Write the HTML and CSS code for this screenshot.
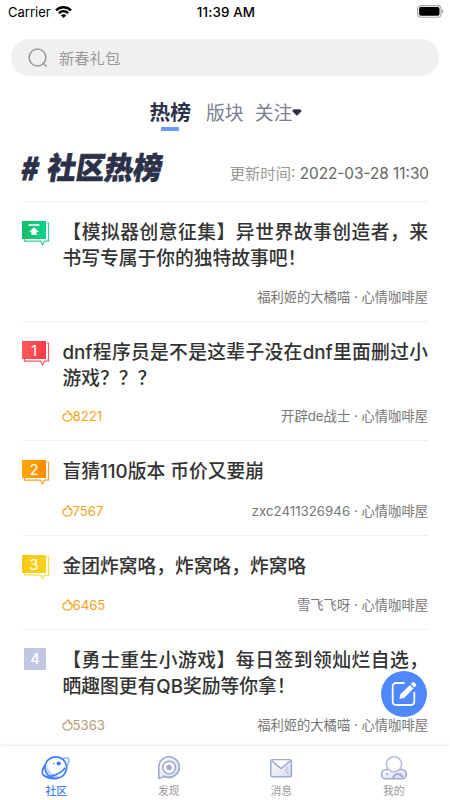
FILE: index.html
```html
<!DOCTYPE html>
<html lang="zh-CN">
<head>
<meta charset="utf-8">
<title>社区热榜</title>
<link rel="stylesheet" href="styles.css">
</head>
<body>
<svg class="defs" width="0" height="0" aria-hidden="true">
  <defs>
    <symbol id="flame" viewBox="0 0 11 12"><path d="M3.4 5.3L2.5 3.8C.7 5 .2 7.5 1.6 9.3 3.4 11.7 7.4 11.7 9.2 9.3 10.5 7.4 10.1 5.2 8.7 3.7L7.4 4.7C7.9 3.1 7.1 1.6 5.6.8 5.5 2.4 4.7 3.4 3.4 4" fill="none" stroke="currentColor" stroke-width="1.15" stroke-linejoin="round"/></symbol>
    <linearGradient id="green" x2="1"><stop stop-color="#17bd68"/><stop offset="1" stop-color="#08d18b"/></linearGradient>
    <linearGradient id="red" x2="1"><stop stop-color="#ff5a5a"/><stop offset="1" stop-color="#fc3946"/></linearGradient>
    <linearGradient id="orange" x2="1"><stop stop-color="#ffa900"/><stop offset="1" stop-color="#ff8a00"/></linearGradient>
    <linearGradient id="yellow" x2="1"><stop stop-color="#fbc916"/><stop offset="1" stop-color="#fbd21b"/></linearGradient>
    <linearGradient id="shade" x2="1" y2="1"><stop stop-color="#fff"/><stop offset="1" stop-color="#d4d9ec"/></linearGradient>
  </defs>
</svg>
<div class="app">
  <header class="status">
    <div class="carrier">Carrier
      <svg width="17" height="12" viewBox="0 0 17 12"><g fill="none" stroke="#000" stroke-width="2.3"><path d="M1 4.4C5.3.2 11.7.2 16 4.4"/><path d="M3.8 7.2c2.8-2.6 6.6-2.6 9.4 0"/></g><path d="M8.5 12L5.9 9.4c1.5-1.4 3.7-1.4 5.2 0z"/></svg>
    </div>
    <div class="clock">11:39 AM</div>
    <svg class="battery" width="27" height="13" viewBox="0 0 27 13"><rect x=".6" y=".6" width="23.4" height="11.6" rx="3.2" fill="none" stroke="#a5a5a5" stroke-width="1.1"/><rect x="2.1" y="2.1" width="20.4" height="8.6" rx="1.7"/><path d="M25 4.3c1.7.6 1.7 3.6 0 4.2z" fill="#999"/></svg>
  </header>
  <div class="search">
    <svg width="20" height="20" viewBox="0 0 20 20" fill="none" stroke="#999" stroke-width="1.5"><circle cx="9.5" cy="9.5" r="8.4"/><path d="M14.8 14.8l3.8 3.8"/></svg>
    <span>新春礼包</span>
  </div>
  <nav class="tabs">
    <span class="tab active">热榜</span>
    <span class="tab">版块</span>
    <span class="tab">关注<svg width="10" height="7" viewBox="0 0 10 7"><path d="M1.6.7h6.6L9.3 2 5.4 6.1q-.5.4-1 0L.5 2z" fill="#2a3149" stroke="#2a3149" stroke-width=".7"/></svg></span>
  </nav>
  <div class="heading">
    <h1><span class="hash">#</span><span class="name">社区热榜</span></h1>
    <p>更新时间: <b>2022-03-28 11:30</b></p>
  </div>
  <main class="list">
    <article class="post double">
      <svg class="badge" width="28" height="26" viewBox="0 0 28 26"><path d="M24.5 2H26.5V20.2H22.4L20.5 24 18.6 20.2H2.6V18" fill="none" stroke="#39cf91" stroke-width="1.2"/><path d="M0 0h24v18H0z" fill="url(#green)"/><path d="M6.5 3.3h11v1.5h-11zM12 6.2l5 4.7h-2.4v3.2H9.4v-3.2H7z" fill="#fff"/></svg>
      <div class="body"><h2>【模拟器创意征集】异世界故事创造者，来书写专属于你的独特故事吧！</h2>
      <div class="meta"><span class="heat"></span><span>福利姬的大橘喵 · 心情咖啡屋</span></div></div>
    </article>
    <article class="post double">
      <svg class="badge" width="28" height="26" viewBox="0 0 28 26"><path d="M24.5 2H26.5V20.2H22.4L20.5 24 18.6 20.2H2.6V18" fill="none" stroke="#ff5960" stroke-width="1.2"/><path d="M0 0h24v18H0z" fill="url(#red)"/><text x="12" y="14.6">1</text></svg>
      <div class="body"><h2>dnf程序员是不是这辈子没在dnf里面删过小游戏？？？</h2>
      <div class="meta"><span class="heat"><svg width="11" height="12"><use href="#flame"/></svg>8221</span><span>开辟de战士 · 心情咖啡屋</span></div></div>
    </article>
    <article class="post">
      <svg class="badge" width="28" height="26" viewBox="0 0 28 26"><path d="M24.5 2H26.5V20.2H22.4L20.5 24 18.6 20.2H2.6V18" fill="none" stroke="#ffa333" stroke-width="1.2"/><path d="M0 0h24v18H0z" fill="url(#orange)"/><text x="12" y="14.6">2</text></svg>
      <div class="body"><h2>盲猜110版本 币价又要崩</h2>
      <div class="meta"><span class="heat"><svg width="11" height="12"><use href="#flame"/></svg>7567</span><span>zxc2411326946 · 心情咖啡屋</span></div></div>
    </article>
    <article class="post">
      <svg class="badge" width="28" height="26" viewBox="0 0 28 26"><path d="M24.5 2H26.5V20.2H22.4L20.5 24 18.6 20.2H2.6V18" fill="none" stroke="#fbdb4a" stroke-width="1.2"/><path d="M0 0h24v18H0z" fill="url(#yellow)"/><text x="12" y="14.6">3</text></svg>
      <div class="body"><h2>金团炸窝咯，炸窝咯，炸窝咯</h2>
      <div class="meta"><span class="heat"><svg width="11" height="12"><use href="#flame"/></svg>6465</span><span>雪飞飞呀 · 心情咖啡屋</span></div></div>
    </article>
    <article class="post double">
      <span class="rank">4</span>
      <div class="body"><h2>【勇士重生小游戏】每日签到领灿烂自选，晒趣图更有QB奖励等你拿！</h2>
      <div class="meta"><span class="heat muted"><svg width="11" height="12"><use href="#flame"/></svg>5363</span><span>福利姬的大橘喵 · 心情咖啡屋</span></div></div>
    </article>
  </main>
  <button class="compose" aria-label="发帖"><svg width="26" height="26" viewBox="0 0 26 26" fill="none" stroke="#fff" stroke-width="1.8"><path d="M13.5 2H5.5Q1.7 2 1.7 5.8v14.4q0 3.8 3.8 3.8h14q3.8 0 3.8-3.8V11"/><path d="M8.3 18l1.2-4.7L18.9 4l3.5 3.4-9.4 9.5z" fill="#fff" stroke="none"/><path d="M19.9 3l1.5-1.5q1-1 2 0l1.4 1.4q1 1 0 2l-1.5 1.5z" fill="#fff" stroke="none"/></svg></button>
  <nav class="bottom">
    <div class="item on">
      <svg width="30" height="26" viewBox="0 0 30 26" fill="none"><path d="M20 4.2C24.4 2.2 28.5 2.4 28 6c-.2 2.2-1.8 4.9-4.4 7.6" stroke="#8eb4ff" stroke-width="1.5"/><circle cx="14.8" cy="12.6" r="10.8" fill="#fff" stroke="#4380fa" stroke-width="1.7"/><path d="M6.3 6.5C5 14 10.5 20.5 18.5 21.2 10.5 25.5 2.8 17 6.3 6.5z" fill="#b9cdff"/><path d="M4.7 9.2C1.8 12.8.6 16.6 1.9 19.3c2.4 4.9 17.3.7 22.3-6.6" stroke="#4380fa" stroke-width="1.7"/><path d="M4 21.2c3 2 8 2.6 11.8 2.2" stroke="#4380fa" stroke-width="1.7"/><circle cx="17.7" cy="8.5" r="2.1" fill="#3779f8"/><circle cx="12.9" cy="8.5" r=".8" fill="#3779f8"/></svg>
      <span>社区</span>
    </div>
    <div class="item">
      <svg width="30" height="26" viewBox="0 0 30 26" fill="none" stroke="#a1a9d1" stroke-width="1.6"><path d="M4.8 23.3V12.7a10.3 10.3 0 1 1 10.3 9.7c-2 0-4-.4-5.4-1.2-1.2 1.4-2.8 2.1-4.9 2.1z" fill="url(#shade)"/><circle cx="15.1" cy="12.5" r="6.3" fill="#fff"/><circle cx="15.1" cy="12.5" r="2.8" fill="#a1a9d1" stroke="none"/></svg>
      <span>发现</span>
    </div>
    <div class="item">
      <svg width="30" height="26" viewBox="0 0 30 26" fill="none" stroke="#a1a9d1" stroke-width="1.5"><rect x="4.8" y="4.8" width="20.6" height="17" rx="1.6" fill="url(#shade)"/><path d="M5.3 5.4l9.7 8.2 9.8-8.2" fill="#fff"/><path d="M21.5 12.3v1.4M19.5 15.3h1.4M21.5 17v1.6" stroke-width="1.7"/></svg>
      <span>消息</span>
    </div>
    <div class="item">
      <svg width="30" height="26" viewBox="0 0 30 26" fill="none" stroke="#a1a9d1" stroke-width="1.6"><path d="M9.5 14.5H7.2a4.6 4.6 0 0 0 0 9.3h15.6a4.6 4.6 0 0 0 0-9.3h-2.3z" fill="url(#shade)"/><circle cx="15" cy="9.3" r="7.6" fill="#fff" stroke="#b8bfdf"/><path d="M14 23.4c1.5-5.5 7.4-5.7 9.6-1.1" stroke-width="2"/><circle cx="8.2" cy="19.2" r="1.1" fill="#a1a9d1" stroke="none"/></svg>
      <span>我的</span>
    </div>
  </nav>
</div>
</body>
</html>
```
FILE: styles.css
```css
* { box-sizing: border-box; }
body { margin: 0; background: #fff; font-family: Inter, "Noto Sans CJK SC", sans-serif; color: #333; }
h1, h2, p { margin: 0; }
svg { display: block; flex: none; }
.defs { position: absolute; }
.app { position: relative; width: 450px; height: 800px; overflow: hidden; display: flex; flex-direction: column; }
.status { height: 24px; flex: none; display: grid; grid-template-columns: 1fr auto 1fr; align-items: center; padding: 0 6px 0 8px; color: #000; font-size: 13px; }
.carrier { display: flex; align-items: center; gap: 4px; margin-top: -1px; }
.clock { font-weight: 500; font-size: 13.4px; letter-spacing: .15px; }
.battery { justify-self: end; margin-top: -2px; }
.search { height: 37px; flex: none; margin: 15px 11px 0; padding-left: 17px; border-radius: 19px; background: #f0f0f0; display: flex; align-items: center; gap: 11px; color: #999; font-size: 15.3px; }
.search span { margin-top: -2px; }
.tabs { height: 55px; flex: none; padding: 24px 0 0 149.5px; display: flex; align-items: flex-start; gap: 12px; font-size: 18.8px; line-height: 26px; color: #7c8094; white-space: nowrap; }
.tab { display: flex; align-items: center; margin: 1px 0 0 3px; height: 26px; }
.tab + .tab + .tab { margin-left: -1px; }
.tab svg { margin-top: -4px; }
.tab.active { margin: -1px 0 0; height: 32px; flex-direction: column; font-size: 20.8px; line-height: 28px; font-weight: 600; color: #2a3149; }
.tab.active::after { content: ""; width: 18px; height: 3.5px; background: #6c9bff; flex: none; }
.heading { height: 70px; flex: none; margin: 0 21px 0 22px; display: flex; justify-content: space-between; padding-top: 15px; }
.heading h1 { display: flex; align-items: center; height: 40px; font: 900 28.7px/40px "Noto Sans CJK SC", sans-serif; color: #2b3148; transform: skewX(-9deg) scaleY(1.06); }
.hash { width: 26px; font-size: 29px; -webkit-text-stroke: 1px #2b3148; }
.name { -webkit-text-stroke: .6px #2b3148; }
.heading p { font-size: 15.3px; line-height: 24px; padding-top: 16px; color: #999; white-space: nowrap; }
.heading b { font-weight: 400; color: #666; }
.list { flex: 1; min-height: 0; overflow: hidden; margin: 0 22px; }
.post { display: flex; height: 94.4px; padding-top: 16px; border-top: 1px solid #f0f0f0; }
.post.double { height: 119.7px; }
.badge { margin-top: 3px; margin-right: 12.5px; }
.badge text { font: 400 15px Inter, sans-serif; fill: #fff; text-anchor: middle; }
.rank { width: 22px; height: 22px; margin: 2px 16.5px 0 2px; background: #c1c6e3; color: #fff; font-size: 14.5px; font-weight: 500; line-height: 22px; text-align: center; border-radius: 1px; flex: none; }
.body { flex: 1; min-width: 0; display: flex; flex-direction: column; justify-content: space-between; padding: 2px 0 14px; }
.body h2 { font-size: 18.75px; font-weight: 500; line-height: 26.25px; text-align: justify; }
.meta { display: flex; justify-content: space-between; font-size: 13.3px; line-height: 20px; color: #777; white-space: nowrap; }
.heat { display: flex; align-items: center; gap: 0; margin-left: -1px; color: #f5a01c; font-size: 13.2px; }
.muted { color: #b39b75; }
.compose { position: absolute; left: 381px; top: 671px; width: 46px; height: 46px; border: 0; border-radius: 50%; padding: 0; background: #4f88fb; display: flex; align-items: center; justify-content: center; }
.bottom { height: 54px; flex: none; display: grid; grid-template-columns: repeat(4, 1fr); background: #fff; box-shadow: 0 -1px 3px rgba(0,0,0,.1); position: relative; }
.item { display: flex; flex-direction: column; align-items: center; padding-top: 9px; font-size: 10.8px; line-height: 16px; color: #999; gap: 3px; }
.on { color: #3f80fa; font-weight: 500; }
```
